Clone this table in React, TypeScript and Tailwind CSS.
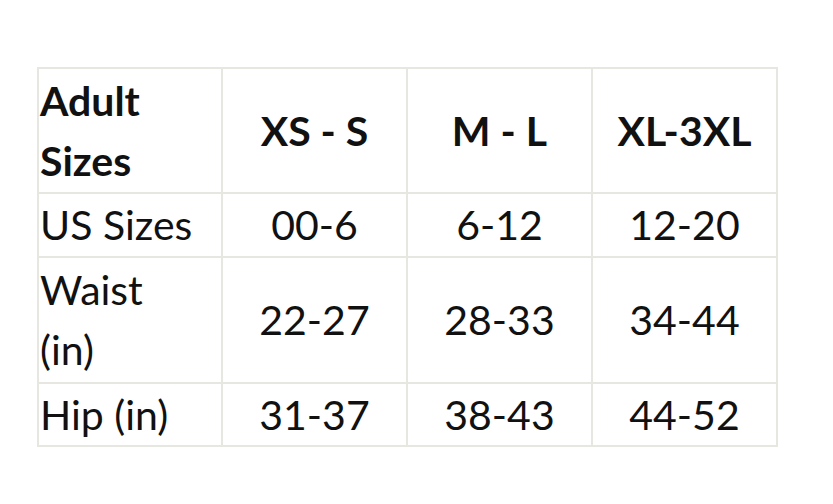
import { Fragment } from "react";

const header = ["XS - S", "M - L", "XL-3XL"];

const rows = [
  { label: "US Sizes", values: ["00-6", "6-12", "12-20"], wrap: false },
  { label: "Waist (in)", values: ["22-27", "28-33", "34-44"], wrap: true },
  { label: "Hip (in)", values: ["31-37", "38-43", "44-52"], wrap: false },
];

const cell = "flex items-center border-r-2 border-b-2 border-[#e7e7e2]";

const App = () => {
  return (
    <div className="w-[833px] h-[504px] bg-white pt-[67px] pl-[37px] text-[#111] font-['Lato','Liberation_Sans',sans-serif]">
      <div className="grid w-[741px] grid-cols-[184px_185px_185px_185px] grid-rows-[125px_64px_126px_63px] border-l-2 border-t-2 border-[#e7e7e2] text-[41px] leading-[60px]">
        <div className={`${cell} pl-[1px] font-bold`}>
          <span className="w-[120px]">Adult Sizes</span>
        </div>
        {header.map((h) => (
          <div key={h} className={`${cell} justify-center font-bold`}>
            {h}
          </div>
        ))}

        {rows.map((row) => (
          <Fragment key={row.label}>
            <div className={`${cell} pl-[1px]`}>
              <span className={row.wrap ? "w-[110px]" : ""}>{row.label}</span>
            </div>
            {row.values.map((v) => (
              <div key={v} className={`${cell} justify-center`}>
                {v}
              </div>
            ))}
          </Fragment>
        ))}
      </div>
    </div>
  );
};

export default App;
